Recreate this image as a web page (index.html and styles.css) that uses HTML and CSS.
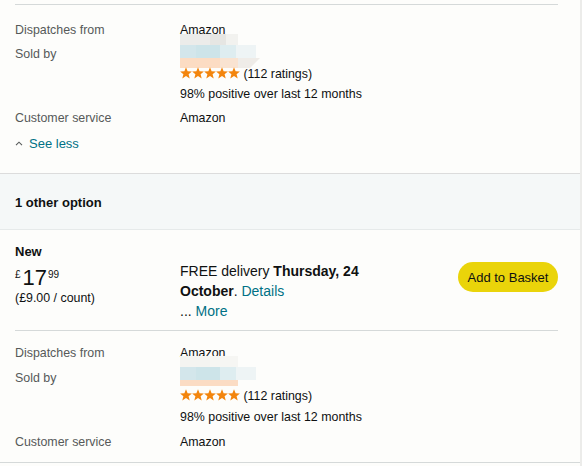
FILE: index.html
```html
<!DOCTYPE html>
<html>
<head>
<meta charset="utf-8">
<link rel="stylesheet" href="styles.css">
</head>
<body>
<div class="page">
  <section class="merchant first">
    <div class="grid">
      <div class="label">Dispatches from</div>
      <div class="value">Amazon</div>
      <div class="label">Sold by</div>
      <div class="value seller">
        <svg class="blur" width="84" height="34" viewBox="0 0 84 34">
          <rect x="0" y="0" width="30" height="11" fill="#ececea"/>
          <rect x="30" y="0" width="16" height="11" fill="#e6e6e3"/>
          <rect x="46" y="0" width="12" height="11" fill="#f2f2ef"/>
          <rect x="0" y="11" width="16" height="13" fill="#d3e6eb"/>
          <rect x="16" y="11" width="24" height="13" fill="#cde4e9"/>
          <rect x="40" y="11" width="16" height="13" fill="#deedf0"/>
          <rect x="56" y="11" width="20" height="13" fill="#eef4f5"/>
          <rect x="0" y="24" width="40" height="10" fill="#fcdcc3"/>
          <rect x="40" y="24" width="18" height="10" fill="#f9e3d1"/>
          <polygon points="58,24 80,24 70,34 58,34" fill="#efece8"/>
        </svg>
        <div class="stars-line"><svg class="stars" width="60" height="12" viewBox="0 0 60 12"><defs><polygon id="st" points="6,0.3 7.6,4.3 11.9,4.5 8.6,7.2 9.7,11.5 6,9.1 2.3,11.5 3.4,7.2 0.1,4.5 4.4,4.3"/></defs><use href="#st" x="0" fill="#f3850d"/><use href="#st" x="12" fill="#f3850d"/><use href="#st" x="24" fill="#f3850d"/><use href="#st" x="36" fill="#f3850d"/><use href="#st" x="48" fill="#f3850d"/></svg> (112 ratings)</div>
        <div class="positive">98% positive over last 12 months</div>
      </div>
      <div class="label">Customer service</div>
      <div class="value">Amazon</div>
    </div>
    <a class="see-less" href="#"><svg class="caret" width="8" height="5" viewBox="0 0 8 5"><polyline points="1,4.2 4,1.2 7,4.2" fill="none" stroke="#565959" stroke-width="1.1"/></svg>See less</a>
  </section>

  <div class="options-header">1 other option</div>

  <section class="offer">
    <div class="offer-row">
      <div class="price-col">
        <div class="condition">New</div>
        <div class="price"><span class="sym">£</span><span class="whole">17</span><span class="frac">99</span></div>
        <div class="unit">(£9.00 / count)</div>
      </div>
      <div class="delivery">
        <div>FREE delivery <b>Thursday, 24</b></div>
        <div><b>October</b>. <a href="#">Details</a></div>
        <div>... <a href="#">More</a></div>
      </div>
      <button class="basket">Add to Basket</button>
    </div>
    <div class="grid second">
      <div class="label">Dispatches from</div>
      <div class="value">Amazon</div>
      <div class="label">Sold by</div>
      <div class="value seller">
        <svg class="blur" width="84" height="34" viewBox="0 0 84 34">
          <rect x="0" y="0" width="30" height="11" fill="#f4f4f1"/>
          <rect x="30" y="0" width="28" height="11" fill="#f6f6f3"/>
          <rect x="0" y="11" width="16" height="13" fill="#d3e6eb"/>
          <rect x="16" y="11" width="24" height="13" fill="#cde4e9"/>
          <rect x="40" y="11" width="16" height="13" fill="#deedf0"/>
          <rect x="56" y="11" width="20" height="13" fill="#eef4f5"/>
          <rect x="0" y="24" width="58" height="6" fill="#fbdcc4"/>
        </svg>
        <div class="stars-line"><svg class="stars" width="60" height="12" viewBox="0 0 60 12"><use href="#st" x="0" fill="#f3850d"/><use href="#st" x="12" fill="#f3850d"/><use href="#st" x="24" fill="#f3850d"/><use href="#st" x="36" fill="#f3850d"/><use href="#st" x="48" fill="#f3850d"/></svg> (112 ratings)</div>
        <div class="positive">98% positive over last 12 months</div>
      </div>
      <div class="label">Customer service</div>
      <div class="value">Amazon</div>
    </div>
  </section>
</div>
</body>
</html>
```

FILE: styles.css
```css
html, body {
  margin: 0;
  padding: 0;
  background: #fdfdfb;
}
body {
  font-family: "Liberation Sans", Arial, sans-serif;
  color: #0f1111;
}
.page {
  width: 580px;
  border-right: 2px solid #ececea;
  min-height: 466px;
  box-sizing: content-box;
}
a {
  color: #007185;
  text-decoration: none;
}
.merchant {
  margin: 0 22px 0 15px;
  padding-top: 4px;
}
.merchant.first .grid {
  border-top: 1px solid #d5d9d9;
}
.grid {
  display: grid;
  grid-template-columns: 165px 1fr;
  row-gap: 8px;
  padding-top: 17px;
  font-size: 12.4px;
  line-height: 16px;
}
.label {
  color: #565959;
}
.seller .blur {
  display: block;
  margin-top: -12px;
}
.stars-line {
  margin-top: -2px;
}
.stars {
  vertical-align: -1px;
}
.positive {
  margin-top: 4px;
}
.see-less {
  display: block;
  margin-top: 10px;
  font-size: 13px;
  line-height: 16px;
  padding-bottom: 21px;
}
.caret {
  margin: 0 6px 0 0;
  vertical-align: 2px;
}
.options-header {
  border-top: 1px solid #dcdcdc;
  border-bottom: 1px solid #e6eaea;
  background: #f5f8f8;
  font-weight: bold;
  font-size: 13px;
  line-height: 18px;
  padding: 20px 15px 17px;
}
.offer {
  padding: 0 22px 0 15px;
  border-bottom: 1px solid #d5d9d9;
}
.offer-row {
  display: grid;
  grid-template-columns: 165px 1fr auto;
  padding-top: 13px;
  padding-bottom: 9px;
  border-bottom: 1px solid #d5d9d9;
}
.condition {
  font-weight: bold;
  font-size: 13px;
  line-height: 18px;
}
.price {
  line-height: 24px;
  height: 24px;
  margin-top: 2px;
}
.sym, .frac {
  font-size: 10px;
  vertical-align: 7px;
}
.sym {
  margin-right: 2px;
}
.whole {
  font-size: 22px;
  margin-right: 1px;
}
.unit {
  font-size: 12.4px;
  line-height: 16px;
  margin-top: 3px;
  color: #0f1111;
}
.delivery {
  margin-top: 18px;
  font-size: 14px;
  line-height: 20px;
}
.basket {
  margin-top: 19px;
  width: 100px;
  height: 30px;
  border: none;
  border-radius: 15px;
  background: #ead40a;
  color: #0f1111;
  font-family: "Liberation Sans", Arial, sans-serif;
  font-size: 13px;
  padding: 0;
}
.grid.second {
  padding-top: 14px;
  padding-bottom: 12px;
  row-gap: 9px;
}
.grid.second .seller .blur {
  margin-top: -14px;
}
.grid.second .positive {
  margin-top: 5px;
}
```
